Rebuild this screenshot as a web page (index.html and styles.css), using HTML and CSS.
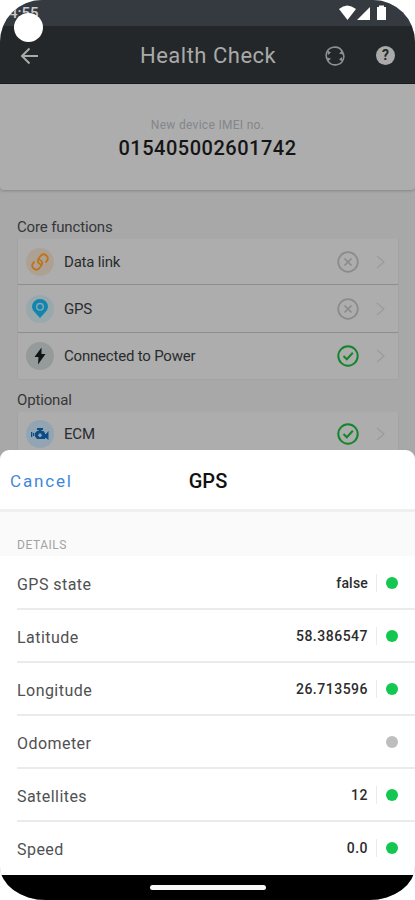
FILE: index.html
```html
<!DOCTYPE html>
<html lang="en">
<head>
<meta charset="utf-8">
<title>Health Check</title>
<link rel="stylesheet" href="styles.css">
</head>
<body>
<div class="phone">
  <div class="status">
    <span class="clock">4:55</span>
    <svg class="sys" width="48" height="16" viewBox="0 0 48 16"><path d="M0 4Q8-3 17 4L8.500 15Z"/><path d="M18 15L31 2V15Z"/><path d="M38 2h2V.5h5V2h2v13h-9Z"/></svg>
    <span class="camera"></span>
  </div>
  <header class="appbar">
    <svg class="back" width="20" height="18" viewBox="0 0 20 18"><path d="M18 9H2M9.500 1.500L2 9l7.500 7.500"/></svg>
    <h1>Health Check</h1>
    <svg class="sync" width="20" height="20" viewBox="0 0 20 20"><path d="M1.200 9A8.600 8.600 0 0 1 17.500 6M18.800 11A8.600 8.600 0 0 1 2.500 14M1.200 9A8.600 8.600 0 0 0 2.500 14M18.800 11A8.600 8.600 0 0 0 17.500 6"/><path class="heads" d="M2 11.500l4 1-3.500 3.500ZM18 8.500l-4-1 3.500-3.500ZM2.500 4.500l3.500 2-3 2.500ZM17.500 15.500l-3.500-2 3-2.500Z"/></svg>
    <span class="help">?</span>
  </header>
  <section class="imei"><p>New device IMEI no.</p><strong>015405002601742</strong></section>
  <main class="functions">
    <h2>Core functions</h2>
    <div class="card">
      <div class="row"><span class="badge orange"><svg width="18" height="18" viewBox="0 0 18 18"><path d="M10 11.500C6.500 10.500 6 7.500 8 5l2-2.500a4 4 0 0 1 6 5.200L14.500 9.500M8 6.500c3.500 1 4 4 2 6.500l-2 2.500a4 4 0 0 1-6-5.200L3.500 8.500"/></svg></span><b>Data link</b><svg class="mark" width="22" height="22" viewBox="0 0 22 22"><circle cx="11" cy="11" r="9.800"/><path d="M7.500 7.500l7 7m0-7l-7 7"/></svg><svg class="next" width="9" height="14" viewBox="0 0 9 14"><path d="M1 1l7 6-7 6"/></svg></div>
      <div class="row"><span class="badge cyan"><svg width="16" height="20" viewBox="0 0 16 20"><path fill="#1285ad" d="M8 19L3 13.500Q0 10.500 0 8a8 8 0 0 1 16 0q0 2.500-3 5.500Z"/><circle cx="8" cy="7.800" r="4" fill="#8aa7b1"/><circle cx="8" cy="7.800" r="2.600" fill="#1285ad"/></svg></span><b>GPS</b><svg class="mark" width="22" height="22" viewBox="0 0 22 22"><circle cx="11" cy="11" r="9.800"/><path d="M7.500 7.500l7 7m0-7l-7 7"/></svg><svg class="next" width="9" height="14" viewBox="0 0 9 14"><path d="M1 1l7 6-7 6"/></svg></div>
      <div class="row"><span class="badge gray"><svg width="12" height="18" viewBox="0 0 12 18"><path fill="#101416" d="M7.500 .5L.5 10H4.500L4 17.500 11.500 7H7.500Z"/></svg></span><b>Connected to Power</b><svg class="mark ok" width="22" height="22" viewBox="0 0 22 22"><circle cx="11" cy="11" r="9.700"/><path d="M6.500 11l3.300 3.300 6-6.500"/></svg><svg class="next" width="9" height="14" viewBox="0 0 9 14"><path d="M1 1l7 6-7 6"/></svg></div>
    </div>
    <h2 class="second">Optional</h2>
    <div class="card">
      <div class="row"><span class="badge blue"><svg width="18" height="14" viewBox="0 0 18 14"><path fill="#0b4c86" fill-rule="evenodd" d="M6 1h6v2h-1.500V4h2L14 6v1h1l2.500-3v9L15 11h-1v1H6l-2-2.500V6l2-2h1.500V3H6ZM0 5h1.300v5H0ZM2 6h1.300v3H2ZM9 6L6.800 8.200 9 10.400l2.200-2.200Z"/></svg></span><b>ECM</b><svg class="mark ok" width="22" height="22" viewBox="0 0 22 22"><circle cx="11" cy="11" r="9.700"/><path d="M6.500 11l3.300 3.300 6-6.500"/></svg><svg class="next" width="9" height="14" viewBox="0 0 9 14"><path d="M1 1l7 6-7 6"/></svg></div>
    </div>
  </main>
  <section class="sheet">
    <header class="sheet-head"><span class="cancel">Cancel</span><h3>GPS</h3></header>
    <div class="details">DETAILS</div>
    <ul>
      <li><span>GPS state</span><em class="word">false</em><i></i></li>
      <li><span>Latitude</span><em>58.386547</em><i></i></li>
      <li><span>Longitude</span><em>26.713596</em><i></i></li>
      <li><span>Odometer</span><i class="off"></i></li>
      <li><span>Satellites</span><em>12</em><i></i></li>
      <li><span>Speed</span><em>0.0</em><i></i></li>
    </ul>
  </section>
  <footer><span></span></footer>
</div>
</body>
</html>
```
FILE: styles.css
```css
* { box-sizing: border-box; }
body { margin: 0; background: #fff; font-family: Roboto, sans-serif; }
h1, h2, h3, p, ul { margin: 0; padding: 0; font-weight: 400; }
svg { display: block; flex: none; fill: none; }
.phone { width: 415px; height: 900px; overflow: hidden; border-radius: 42px 42px 46px 46px / 42px 42px 34px 34px; background: #a8a8a8; display: flex; flex-direction: column; }
.status { position: relative; height: 26px; flex: none; background: #353a41; display: flex; justify-content: space-between; padding: 5px 28px 0 9px; }
.clock { font-size: 15px; line-height: 17px; font-weight: 500; color: #c9cacc; }
.sys { fill: #fff; }
.camera { position: absolute; left: 14px; top: 13px; width: 29px; height: 29px; border-radius: 50%; background: #fff; }
.appbar { height: 58px; flex: none; background: #232729; border-bottom: 1px solid #08090a; display: flex; align-items: center; padding: 2px 20px 0 20px; color: #aaa; }
.back { stroke: #aaa; stroke-width: 2; }
h1 { margin-left: 100px; width: 145px; font-size: 22px; line-height: 26px; letter-spacing: .5px; white-space: nowrap; padding-top: 1px; }
.sync { margin-left: 40px; stroke: #8d8f90; stroke-width: 1.600; }
.heads { fill: #8d8f90; stroke: none; }
.help { margin-left: 31px; width: 19px; height: 19px; border-radius: 50%; background: #aaa; color: #232729; font-size: 14px; line-height: 19px; font-weight: 700; text-align: center; }
.imei { height: 106px; flex: none; background: #adadad; border-radius: 0 0 4px 4px; box-shadow: 0 1px 3px #858585; text-align: center; padding-top: 34px; }
.imei p { font-size: 12px; line-height: 15px; letter-spacing: .3px; color: #82878a; }
.imei strong { display: block; font-size: 20px; line-height: 31px; font-weight: 500; letter-spacing: .5px; color: #151515; }
.functions { height: 260px; flex: none; padding: 26px 16px 0 17px; overflow: hidden; }
h2 { height: 22px; font-size: 15px; line-height: 22px; letter-spacing: -.15px; color: #34373a; }
h2.second { margin-top: 9px; }
.card { background: #adadad; border: 1px solid #a3a3a3; border-top-color: #a9a9a9; border-radius: 2px; }
.row { height: 48px; display: flex; align-items: center; padding: 0 13px 0 8px; }
.row:last-child { height: 47px; }
.row:first-child { height: 45px; }
.row:only-child { height: 43px; }
.row + .row { border-top: 1px solid #8e8e8e; }
.row b { flex: 1; font-size: 15px; font-weight: 400; color: #292c2e; letter-spacing: -.2px; margin-left: 10px; }
.badge { width: 28px; height: 28px; border-radius: 50%; display: flex; align-items: center; justify-content: center; flex: none; }
.orange { background: #ada196; }
.orange svg { stroke: #bd7418; stroke-width: 1.800; }
.cyan { background: #98a9ae; }
.gray { background: #959a9b; }
.blue { background: #93a5b3; }
.mark { stroke: #8b8b8b; stroke-width: 1.700; margin-right: 17px; }
.ok { stroke: #13852a; stroke-width: 2; }
.next { stroke: #9b9b9b; stroke-width: 1.200; }
.sheet { height: 425px; flex: none; background: #fff; border-radius: 9px 9px 0 0; }
.sheet-head { height: 62px; border-bottom: 3px solid #efefef; display: grid; grid-template-columns: 1fr auto 1fr; align-items: center; padding: 2px 9px 0 10px; }
.cancel { font-size: 17px; letter-spacing: 1.850px; color: #3e88db; }
h3 { font-size: 20px; font-weight: 500; color: #111; }
.details { height: 44px; background: #fafafa; padding: 25px 17px 0; font-size: 12px; line-height: 17px; letter-spacing: .55px; color: #a0a3a6; }
ul { list-style: none; padding-top: 1px; }
li { height: 53px; margin-left: 17px; padding-right: 17px; border-bottom: 2px solid #ebebeb; display: flex; align-items: center; }
li:last-child { border: 0; height: 51px; }
li span { flex: 1; font-size: 16px; letter-spacing: .45px; color: #505152; padding-top: 3px; }
li em { font-size: 14px; font-style: normal; font-weight: 500; letter-spacing: .5px; color: #2c2c2c; padding-right: 8px; border-right: 1px solid #ebebeb; line-height: 18px; }
li em.word { letter-spacing: .2px; }
li i { width: 12px; height: 12px; margin-left: 9px; border-radius: 50%; background: #13c750; }
li i.off { background: #bebebe; }
footer { height: 25px; flex: none; background: #000; display: flex; justify-content: center; padding-top: 10px; }
footer span { width: 116px; height: 5px; border-radius: 3px; background: #f8f8f8; }
```
